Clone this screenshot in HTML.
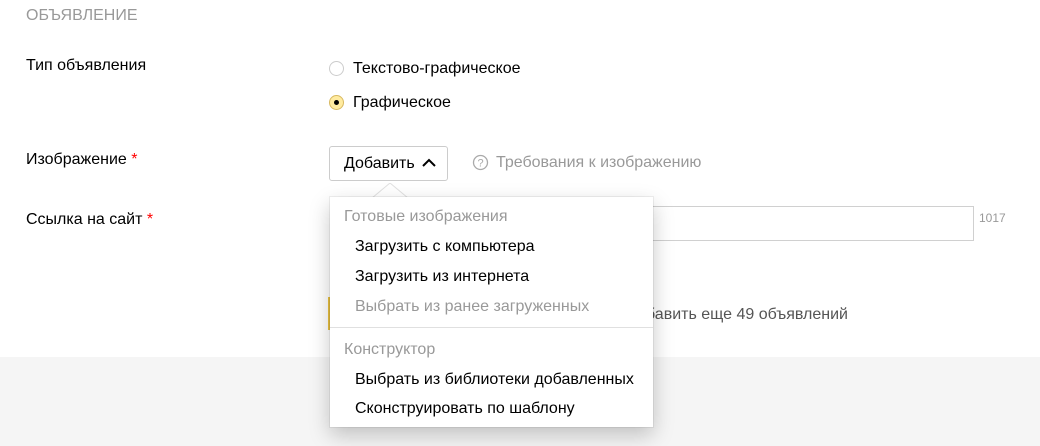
<!DOCTYPE html>
<html><head><meta charset="utf-8"><style>
*{margin:0;padding:0;box-sizing:border-box}
body{width:1040px;height:446px;overflow:hidden;background:#fff;font-family:"Liberation Sans",Arial,sans-serif;font-size:16px;color:#000;position:relative}
.a{position:absolute;white-space:nowrap}
.g{color:#999}
.footer{position:absolute;left:0;top:357px;width:1040px;height:89px;background:#f5f5f5}
.radio{position:absolute;width:15px;height:15px;border-radius:50%;border:1px solid #ccc;background:#fff}
.menu{position:absolute;left:330px;top:197px;width:323px;height:230px;background:#fff;box-shadow:0 8px 20px rgba(0,0,0,.22),0 0 0 1px rgba(0,0,0,.06)}
.menu div{position:absolute;white-space:nowrap}
</style></head><body>
<div class="footer"></div>
<div class="a" style="left:26px;top:7px;font-size:16px;color:#999">ОБЪЯВЛЕНИЕ</div>
<div class="a" style="left:26px;top:57px">Тип объявления</div>
<div class="radio" style="left:329px;top:61px"></div>
<div class="a" style="left:353px;top:60px">Текстово-графическое</div>
<div class="radio" style="left:329px;top:95px;background:#ffeba0;border-color:#d8b960"><div style="position:absolute;left:4px;top:4px;width:5px;height:5px;border-radius:50%;background:#000"></div></div>
<div class="a" style="left:353px;top:94px">Графическое</div>
<div class="a" style="left:26px;top:151px">Изображение<span style="color:#f00"> *</span></div>
<div class="a" style="left:329px;top:146px;width:119px;height:35px;border:1px solid #ccc;border-radius:3px"></div>
<div class="a" style="left:344px;top:155px">Добавить</div>
<svg class="a" style="left:421px;top:157px" width="16" height="12"><path d="M2 9 L8 3 L14 9" fill="none" stroke="#000" stroke-width="2"/></svg>
<svg class="a" style="left:472px;top:154px" width="17" height="17"><circle cx="8.5" cy="8.5" r="7" fill="none" stroke="#aaa" stroke-width="1.3"/><text x="8.5" y="12.5" font-size="11" text-anchor="middle" fill="#aaa" font-family="Liberation Sans">?</text></svg>
<div class="a g" style="left:496px;top:154px">Требования к изображению</div>
<div class="a" style="left:26px;top:211px">Ссылка на сайт<span style="color:#f00"> *</span></div>
<div class="a" style="left:330px;top:206px;width:644px;height:35px;border:1px solid #d0d0d0"></div>
<div class="a g" style="left:979px;top:211px;font-size:12px">1017</div>
<div class="a" style="left:328px;top:297px;width:3px;height:33px;background:#e8c040"></div>
<div class="a" style="left:646px;top:306px;color:#555">бавить еще 49 объявлений</div>
<svg class="a" style="left:372px;top:183px" width="36" height="16"><path d="M0 15 L18 0 L36 15" fill="#fff" stroke="#e0e0e0"/></svg>
<div class="menu">
<div class="g" style="left:14px;top:11px">Готовые изображения</div>
<div style="left:25px;top:41px">Загрузить с компьютера</div>
<div style="left:25px;top:71px">Загрузить из интернета</div>
<div class="g" style="left:25px;top:101px">Выбрать из ранее загруженных</div>
<div style="left:0;top:130px;width:323px;height:1px;background:#e0e0e0"></div>
<div class="g" style="left:14px;top:144px">Конструктор</div>
<div style="left:25px;top:174px">Выбрать из библиотеки добавленных</div>
<div style="left:25px;top:203px">Сконструировать по шаблону</div>
</div>
</body></html>
